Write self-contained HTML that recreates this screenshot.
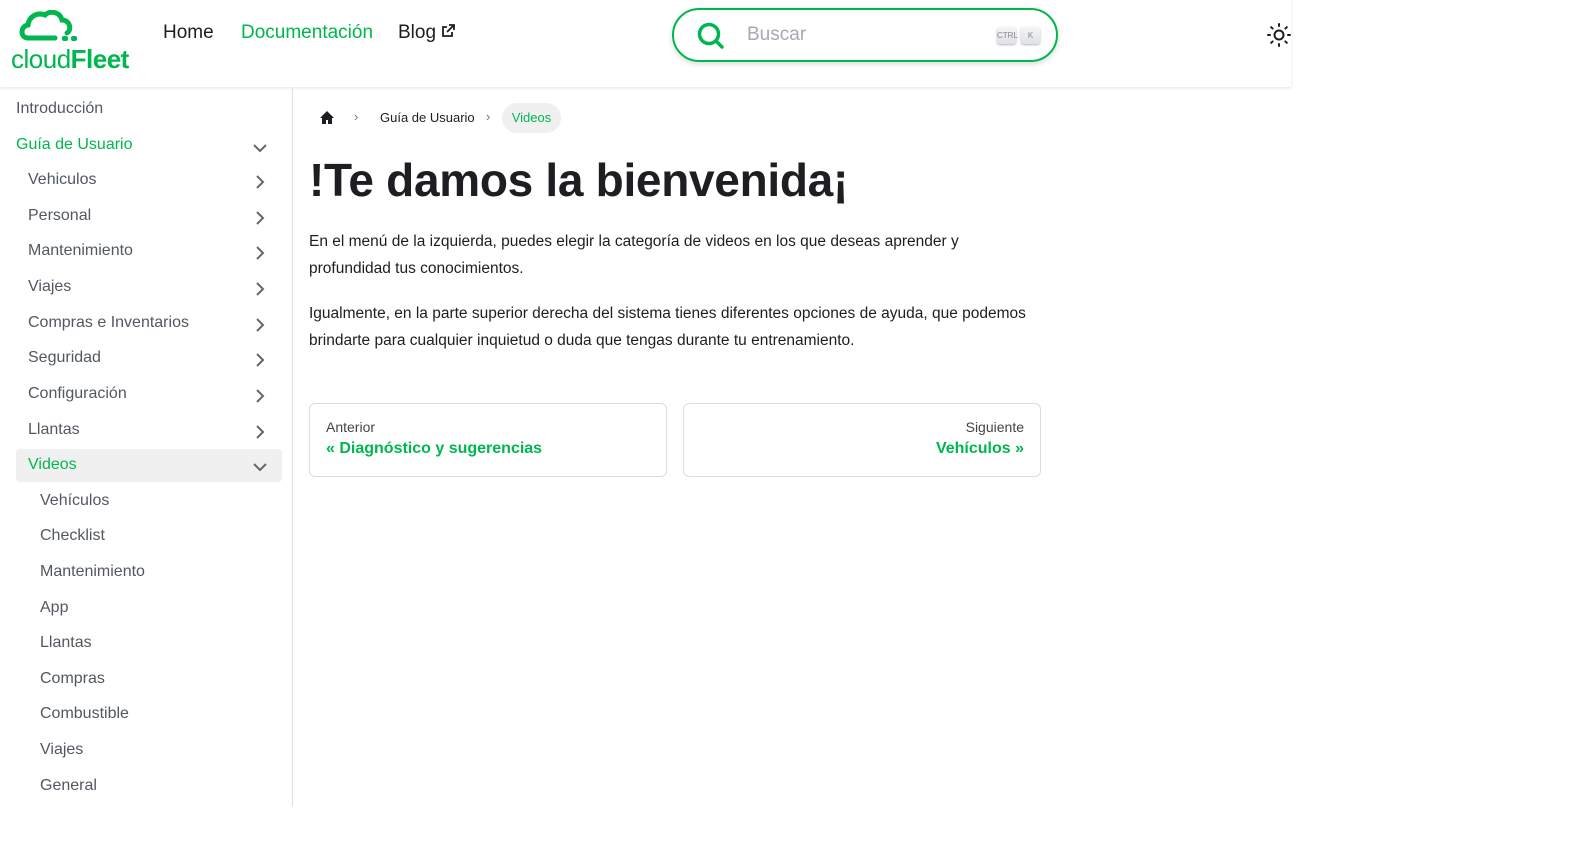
<!DOCTYPE html>
<html><head><meta charset="utf-8"><style>
*{box-sizing:border-box;margin:0;padding:0}
body{width:1585px;height:862px;background:#fff;font-family:"Liberation Sans",sans-serif;color:#1c1e21;position:relative;overflow:hidden}
.hdr{position:absolute;left:0;top:0;width:1291px;height:87px;background:#fff;box-shadow:0 1px 3px rgba(0,0,0,.12)}
.nav{position:absolute;top:22px;font-size:19px}
.search{position:absolute;left:672px;top:8px;width:386px;height:54px;border:2.5px solid #00b74f;border-radius:27px;box-shadow:0 2px 6px rgba(0,0,0,.15)}
.kbd{position:absolute;top:17px;height:17px;border-radius:3px;background:linear-gradient(#f4f5f8,#dfe1e7);box-shadow:0 1px 2px rgba(0,0,0,.3);font-size:8px;color:#888;text-align:center;line-height:17px}
.side{position:absolute;left:0;top:88px;width:293px;height:718px;border-right:1px solid #ddd}
.it{position:absolute;font-size:16px;color:#525860}
.g{color:#00b74f}
.chev{position:absolute;left:252px}
.main{position:absolute;left:309px}
p{font-size:15.5px;line-height:26.5px;color:#1c1e21}
.card{position:absolute;top:403px;width:358px;height:74px;border:1px solid #dadde1;border-radius:6px}
</style></head><body>
<div class="hdr">
<svg style="position:absolute;left:18px;top:10px" width="64" height="34" viewBox="0 0 64 34"><path d="M10 28 C2 28 2 16 10 15 C11 6 20 2 27 5 C32 0 42 2 44 10 C52 10 54 20 49 23" fill="none" stroke="#00b74f" stroke-width="5" stroke-linecap="round"/><path d="M10 28 H37" stroke="#00b74f" stroke-width="5" stroke-linecap="round"/><rect x="44" y="26" width="6" height="5" rx="2" fill="#00b74f"/><rect x="53" y="26" width="6" height="5" rx="2" fill="#00b74f"/></svg>
<div style="position:absolute;left:11px;top:44px;font-size:26px;color:#00b74f;letter-spacing:-0.5px">cloud<b>Fleet</b></div>
<div class="nav" style="left:163px">Home</div>
<div class="nav g" style="left:241px">Documentación</div>
<div class="nav" style="left:398px">Blog <svg width="14" height="14" viewBox="0 0 14 14" style="vertical-align:0"><path d="M11 8v4H2V3h4M8 1h5v5M13 1L6 8" fill="none" stroke="#1c1e21" stroke-width="1.8"/></svg></div>
<div class="search">
<svg style="position:absolute;left:22px;top:11px" width="30" height="30" viewBox="0 0 30 30"><circle cx="13" cy="13" r="9.5" fill="none" stroke="#00b74f" stroke-width="3.5"/><path d="M20 20l6 6" stroke="#00b74f" stroke-width="3.5" stroke-linecap="round"/></svg>
<div style="position:absolute;left:73px;top:14px;font-size:19px;color:#a4a9b6">Buscar</div>
<div class="kbd" style="left:323px;width:19px">CTRL</div>
<div class="kbd" style="left:347px;width:19px">K</div>
</div>
<svg style="position:absolute;left:1267px;top:23px" width="24" height="24" viewBox="0 0 24 24"><circle cx="12" cy="12" r="4.5" fill="none" stroke="#1c1e21" stroke-width="2"/><g stroke="#1c1e21" stroke-width="2" stroke-linecap="round"><path d="M12 1v2M12 21v2M1 12h2M21 12h2M4.2 4.2l1.4 1.4M18.4 18.4l1.4 1.4M4.2 19.8l1.4-1.4M18.4 5.6l1.4-1.4"/></g></svg>
</div>

<div class="side">
<div class="it" style="left:16px;top:12px">Introducción</div>
<div class="it g" style="left:16px;top:48px">Guía de Usuario</div>
<svg class="chev" style="top:52px" width="16" height="16" viewBox="0 0 16 16"><path d="M2 5l6 6 6-6" fill="none" stroke="#666" stroke-width="2"/></svg>
<div class="it" style="left:28px;top:83px">Vehiculos</div>
<div class="it" style="left:28px;top:119px">Personal</div>
<div class="it" style="left:28px;top:154px">Mantenimiento</div>
<div class="it" style="left:28px;top:190px">Viajes</div>
<div class="it" style="left:28px;top:226px">Compras e Inventarios</div>
<div class="it" style="left:28px;top:261px">Seguridad</div>
<div class="it" style="left:28px;top:297px">Configuración</div>
<div class="it" style="left:28px;top:333px">Llantas</div>
<svg class="chev" style="top:86px" width="16" height="270" viewBox="0 0 16 270"><g fill="none" stroke="#666" stroke-width="2"><path d="M5 2l6 6-6 6"/><path d="M5 38l6 6-6 6"/><path d="M5 73l6 6-6 6"/><path d="M5 109l6 6-6 6"/><path d="M5 145l6 6-6 6"/><path d="M5 180l6 6-6 6"/><path d="M5 216l6 6-6 6"/><path d="M5 252l6 6-6 6"/></g></svg>
<div style="position:absolute;left:16px;top:361px;width:266px;height:33px;background:#f0f0f0;border-radius:4px"></div>
<div class="it g" style="left:28px;top:368px">Videos</div>
<svg class="chev" style="top:371px" width="16" height="16" viewBox="0 0 16 16"><path d="M2 5l6 6 6-6" fill="none" stroke="#666" stroke-width="2"/></svg>
<div class="it" style="left:40px;top:404px">Vehículos</div>
<div class="it" style="left:40px;top:439px">Checklist</div>
<div class="it" style="left:40px;top:475px">Mantenimiento</div>
<div class="it" style="left:40px;top:511px">App</div>
<div class="it" style="left:40px;top:546px">Llantas</div>
<div class="it" style="left:40px;top:582px">Compras</div>
<div class="it" style="left:40px;top:617px">Combustible</div>
<div class="it" style="left:40px;top:653px">Viajes</div>
<div class="it" style="left:40px;top:689px">General</div>
</div>

<svg style="position:absolute;left:319px;top:110px" width="16" height="15" viewBox="0 0 16 15"><path d="M8 1L1 8h2v6h4v-4h2v4h4V8h2z" fill="#1c1e21"/></svg>
<div style="position:absolute;left:354px;top:109px;font-size:13px;color:#777">›</div>
<div style="position:absolute;left:380px;top:110px;font-size:13px">Guía de Usuario</div>
<div style="position:absolute;left:486px;top:109px;font-size:13px;color:#777">›</div>
<div style="position:absolute;left:502px;top:103px;width:59px;height:30px;background:#f0f0f0;border-radius:15px;font-size:13px;color:#00b74f;text-align:center;line-height:30px">Videos</div>

<div class="main" style="top:153px;font-size:46px;font-weight:bold;letter-spacing:-0.3px">!Te damos la bienvenida¡</div>
<p class="main" style="top:229px;width:720px">En el menú de la izquierda, puedes elegir la categoría de videos en los que deseas aprender y profundidad tus conocimientos.</p>
<p class="main" style="top:301px;width:740px">Igualmente, en la parte superior derecha del sistema tienes diferentes opciones de ayuda, que podemos brindarte para cualquier inquietud o duda que tengas durante tu entrenamiento.</p>

<div class="card" style="left:309px">
<div style="position:absolute;left:16px;top:15px;font-size:14px;color:#444">Anterior</div>
<div style="position:absolute;left:16px;top:36px;font-size:16px;color:#00b74f;font-weight:bold">« Diagnóstico y sugerencias</div>
</div>
<div class="card" style="left:683px">
<div style="position:absolute;right:16px;top:15px;font-size:14px;color:#444">Siguiente</div>
<div style="position:absolute;right:16px;top:36px;font-size:16px;color:#00b74f;font-weight:bold">Vehículos »</div>
</div>
</body></html>
